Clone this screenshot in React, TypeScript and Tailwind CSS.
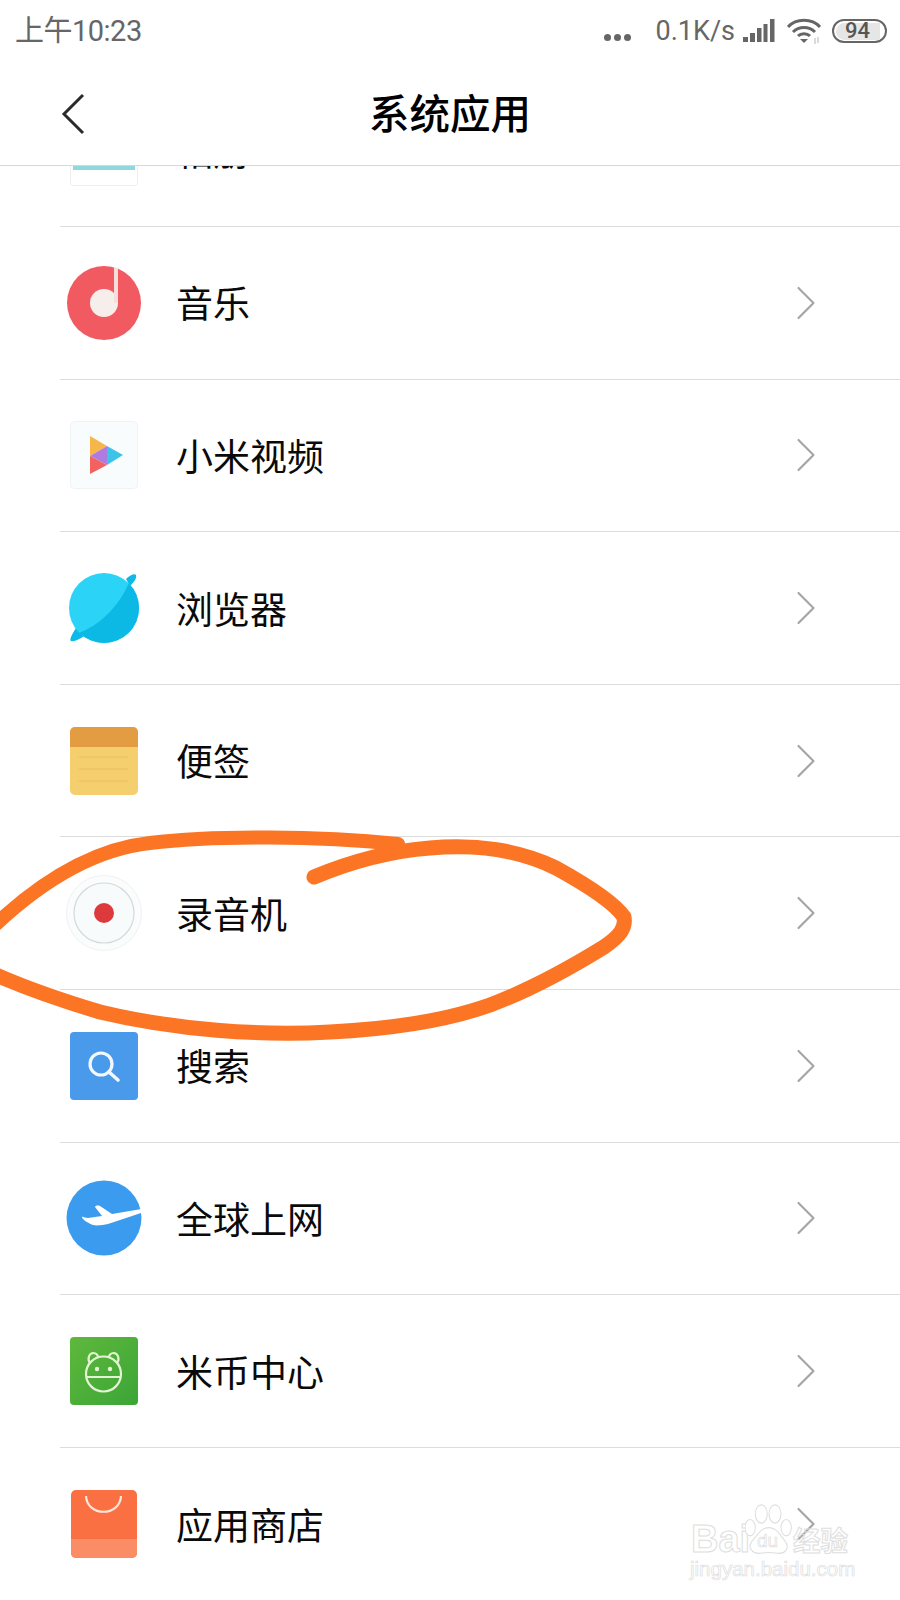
import React from 'react';
import { ChevronRight } from 'lucide-react';

const MusicIcon = () => (
  <svg width="76" height="76" viewBox="0 0 76 76">
    <circle cx="38" cy="38" r="37" fill="#f25a62" />
    <circle cx="38" cy="38" r="14" fill="#f6eeea" />
    <path d="M48 38 V2 L52 3 V38 Z" fill="#f6dedb" />
  </svg>
);

const VideoIcon = () => (
  <svg width="68" height="68" viewBox="0 0 68 68">
    <rect x="0.5" y="0.5" width="67" height="67" rx="4" fill="#f8fcfc" stroke="#eef4f4" />
    <path d="M20 15 L37 25 L20 35 Z" fill="#f6b64a" />
    <path d="M20 35 L37 25 L37 44 Z" fill="#b07be0" />
    <path d="M37 25 L53 34 L37 44 Z" fill="#3cc4e8" />
    <path d="M20 35 L37 44 L20 53 Z" fill="#f4625f" />
  </svg>
);

const BrowserIcon = () => (
  <svg width="76" height="76" viewBox="0 0 76 76">
    <path d="M60 9 C64 5 69 3 70 5 C71 8 68 12 64 16 Z" fill="#0db9e6" />
    <path d="M10 58 C6 64 3 70 5 71 C8 72 14 69 18 66 Z" fill="#0db9e6" />
    <circle cx="38" cy="38" r="35" fill="#2bd4f6" />
    <path d="M62.75 13.25 A35 35 0 0 1 13.25 62.75 C32 56 52 38 62.75 13.25 Z" fill="#0cb9e5" />
  </svg>
);

const NotesIcon = () => (
  <svg width="68" height="68" viewBox="0 0 68 68">
    <rect width="68" height="68" rx="5" fill="#f5cf6d" />
    <path d="M0 20 V5 A5 5 0 0 1 5 0 H63 A5 5 0 0 1 68 5 V20 Z" fill="#e39c42" />
    <path d="M9 30 H58 M9 42 H58 M9 54 H58" stroke="#e8bf5f" strokeWidth="1" />
  </svg>
);

const RecorderIcon = () => (
  <svg width="76" height="76" viewBox="0 0 76 76">
    <circle cx="38" cy="38" r="37.5" fill="#fbfdfd" stroke="#eef2f2" />
    <circle cx="38" cy="38" r="30" fill="#f8fbfb" stroke="#d5d9d9" strokeWidth="1.2" />
    <circle cx="38" cy="38" r="10" fill="#dd3a3e" />
  </svg>
);

const SearchIcon = () => (
  <svg width="68" height="68" viewBox="0 0 68 68">
    <rect width="68" height="68" rx="4" fill="#4a9aec" />
    <circle cx="31" cy="32" r="11" fill="none" stroke="#f2f8fe" strokeWidth="3.2" />
    <path d="M39 40 L48 48" stroke="#f2f8fe" strokeWidth="3.6" strokeLinecap="round" />
  </svg>
);

const PlaneIcon = () => (
  <svg width="76" height="76" viewBox="0 0 76 76">
    <circle cx="38" cy="38" r="37.5" fill="#3b9bef" />
    <path
      d="M75.5 29 L46 34 L34 26 C31 25 29 26 29 27 L36 36 L22 38 C19 38 17 36 16 37 C16 39 20 42 27 45 C31 46 37 45 42 44 L75 33 Z"
      fill="#ffffff"
    />
  </svg>
);

const MibiIcon = () => (
  <svg width="68" height="68" viewBox="0 0 68 68">
    <defs>
      <linearGradient id="mibi" x1="0" y1="0" x2="1" y2="1">
        <stop offset="0" stopColor="#5fb83c" />
        <stop offset="1" stopColor="#3ba537" />
      </linearGradient>
    </defs>
    <rect width="68" height="68" rx="4" fill="url(#mibi)" />
    <g fill="none" stroke="#e3f3d3" strokeWidth="2.2">
      <circle cx="33.5" cy="37" r="17.5" />
      <path d="M20 26 C17 22 19 16 23.5 16 C26 16 28 18 28 20" />
      <path d="M47 26 C50 22 48 16 43.5 16 C41 16 39 18 39 20" />
      <path d="M16 40 H51" />
    </g>
    <circle cx="27" cy="32" r="2.2" fill="#e3f3d3" />
    <circle cx="40" cy="32" r="2.2" fill="#e3f3d3" />
  </svg>
);

const StoreIcon = () => (
  <svg width="66" height="68" viewBox="0 0 66 68">
    <rect width="66" height="68" rx="5" fill="#fb7043" />
    <path d="M0 49 H66 V63 A5 5 0 0 1 61 68 H5 A5 5 0 0 1 0 63 Z" fill="#fb8d66" />
    <path d="M15 6 C16 27 49 27 50 6" fill="none" stroke="#fde6da" strokeWidth="2.2" />
  </svg>
);

const CalendarIcon = () => (
  <svg width="68" height="68" viewBox="0 0 68 68" className="mt-[3px]">
    <rect x="0.5" y="0.5" width="67" height="67" rx="3" fill="#ffffff" stroke="#eeeeee" />
    <rect x="3" y="44" width="62" height="8" fill="#8fd8e0" />
  </svg>
);

const apps = [
  { name: '相册', icon: <CalendarIcon /> },
  { name: '音乐', icon: <MusicIcon /> },
  { name: '小米视频', icon: <VideoIcon /> },
  { name: '浏览器', icon: <BrowserIcon /> },
  { name: '便签', icon: <NotesIcon /> },
  { name: '录音机', icon: <RecorderIcon /> },
  { name: '搜索', icon: <SearchIcon /> },
  { name: '全球上网', icon: <PlaneIcon /> },
  { name: '米币中心', icon: <MibiIcon /> },
  { name: '应用商店', icon: <StoreIcon /> },
];

const StatusBar = () => (
  <div className="h-[70px] flex items-center justify-between pl-[15px] pr-[13px] pb-[8px] text-[#666666] font-['Roboto','Noto_Sans_CJK_SC',sans-serif]">
    <span className="text-[29px] leading-none tracking-[-0.5px]">上午10:23</span>
    <div className="flex items-center">
      <div className="flex gap-[3px] mr-[25px] mt-[12px]">
        <span className="w-[7px] h-[7px] rounded-full bg-[#666666]" />
        <span className="w-[7px] h-[7px] rounded-full bg-[#666666]" />
        <span className="w-[7px] h-[7px] rounded-full bg-[#666666]" />
      </div>
      <span className="text-[27px] leading-none mr-[8px]">0.1K/s</span>
      <svg width="32" height="24" viewBox="0 0 32 24" className="mr-[12px]">
        <rect x="0" y="18" width="5" height="5" fill="#666666" />
        <rect x="7" y="14" width="5" height="9" fill="#666666" />
        <rect x="14" y="9" width="4.5" height="14" fill="#666666" />
        <rect x="20.5" y="5" width="4" height="18" fill="#666666" />
        <rect x="27" y="0" width="4.5" height="23" fill="#666666" />
      </svg>
      <svg width="34" height="26" viewBox="0 0 34 26" className="mr-[11px]">
        <g fill="none" stroke="#666666" strokeWidth="3">
          <path d="M1 9 C9 0 25 0 33 9" />
          <path d="M6 14 C12 8 22 8 28 14" />
          <path d="M11 18 C14 15 20 15 23 18" />
        </g>
        <path d="M13 21 H21 L17 25 Z" fill="#666666" />
        <path d="M28 20 V26 M31 19 V25" stroke="#b5b5b5" strokeWidth="1" />
      </svg>
      <div className="w-[55px] h-[24px] rounded-full border-[2.5px] border-[#666666] p-[1.5px] flex">
        <div className="w-[44px] h-full rounded-l-full rounded-r-[3px] bg-[#e6e6e6] flex items-center justify-center">
          <span className="text-[22px] leading-none font-medium text-[#555555]">94</span>
        </div>
      </div>
    </div>
  </div>
);

const Header = () => (
  <header className="relative z-10 h-[96px] bg-white border-b border-[#d8d8d8] flex items-center justify-center">
    <svg width="26" height="42" viewBox="0 0 26 42" className="absolute left-[60px] top-[23px]">
      <path d="M23 2 L4 21 L23 40" fill="none" stroke="#2b2b2b" strokeWidth="3" />
    </svg>
    <h1 className="text-[40.5px] leading-none font-medium text-black mb-[10px]">系统应用</h1>
  </header>
);

const AppRow = ({ name, icon }: { name: string; icon: React.ReactNode }) => (
  <div className="ml-[60px] h-[152.6px] border-b border-[#dcdcdc] last:border-b-0 flex items-center">
    <div className="w-[88px] flex justify-center shrink-0">{icon}</div>
    <span className="ml-[28px] text-[37px] leading-none text-[#0a0a0a]">{name}</span>
    <ChevronRight size={60} strokeWidth={0.85} className="ml-auto mr-[64px] text-[#a5a5a5]" />
  </div>
);

const Scribble = () => (
  <svg
    width="900"
    height="1600"
    viewBox="0 0 900 1600"
    className="absolute inset-0 z-20 pointer-events-none"
    fill="none"
    stroke="#fb7524"
    strokeLinecap="round"
    strokeLinejoin="round"
  >
    <path strokeWidth="14" d="M-6 926 C30 892 85 850 150 843 C215 835 320 836 398 844" />
    <path strokeWidth="15" d="M314 877 C350 862 390 851 430 848 C475 844 520 850 556 868 C585 884 614 902 624 917 C626 928 620 936 604 947 C570 968 530 990 490 1005 C445 1021 390 1029 330 1032 C260 1036 175 1030 100 1012 C60 1000 30 990 -6 974" />
    <path d="M398 844 L370 858 L404 850 Z" fill="#fb7524" stroke="none" />
  </svg>
);

const Watermark = () => (
  <div className="absolute left-0 top-0 z-20 w-[900px] h-[1600px] pointer-events-none">
    <span className="absolute left-[691px] top-[1520px] text-[38px] leading-none font-['Liberation_Sans',sans-serif] font-bold text-transparent [-webkit-text-stroke:1px_#dedede]">
      Bai
    </span>
    <svg width="48" height="53" viewBox="0 0 56 58" preserveAspectRatio="none" className="absolute left-[745px] top-[1503px]" fill="#ffffff" stroke="#dedede" strokeWidth="1.2">
      <ellipse cx="19" cy="12" rx="7" ry="10" />
      <ellipse cx="35" cy="12" rx="7" ry="10" />
      <ellipse cx="6" cy="27" rx="6" ry="9" />
      <ellipse cx="48" cy="27" rx="6" ry="9" />
      <path d="M28 27 C18 27 14 36 8 42 C2 50 10 56 18 55 C24 54 32 54 38 55 C46 56 53 50 47 42 C41 36 38 27 28 27 Z" />
    </svg>
    <span className="absolute left-[757px] top-[1531px] text-[19px] leading-none font-['Liberation_Sans',sans-serif] text-transparent [-webkit-text-stroke:0.7px_#dedede]">
      du
    </span>
    <span className="absolute left-[793px] top-[1526px] text-[27.5px] leading-none font-bold text-transparent [-webkit-text-stroke:1px_#dedede]">
      经验
    </span>
    <span className="absolute left-[690px] top-[1559px] text-[20.5px] leading-none font-['Liberation_Sans',sans-serif] text-transparent [-webkit-text-stroke:0.7px_#dedede]">
      jingyan.baidu.com
    </span>
  </div>
);

export default function App() {
  return (
    <div className="relative w-[900px] h-[1600px] overflow-hidden bg-white font-['Noto_Sans_CJK_SC','Noto_Sans',sans-serif]">
      <StatusBar />
      <Header />
      <div className="-mt-[91.5px]">
        {apps.map((app) => (
          <AppRow key={app.name} name={app.name} icon={app.icon} />
        ))}
      </div>
      <Scribble />
      <Watermark />
    </div>
  );
}
